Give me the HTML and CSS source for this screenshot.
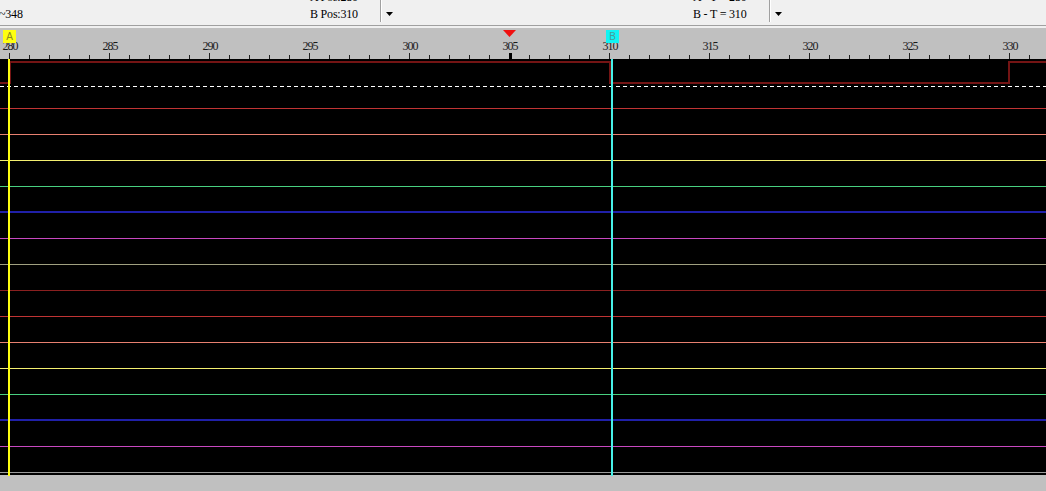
FILE: index.html
```html
<!DOCTYPE html>
<html>
<head>
<meta charset="utf-8">
<link rel="stylesheet" href="styles.css">
</head>
<body>
<div class="app">
  <div class="toolbar">
    <div class="field">
      <div class="lines range"><span>&nbsp;</span><span>~348</span></div>
    </div>
    <div class="combo combo-pos">
      <div class="lines"><span>A Pos:280</span><span>B Pos:310</span></div>
      <div class="sep"></div>
      <div class="drop"><svg class="arrow" width="7" height="4" viewBox="0 0 7 4"><polygon points="0,0 7,0 3.5,4"/></svg></div>
    </div>
    <div class="combo combo-diff">
      <div class="lines"><span>A - T = 280</span><span>B - T = 310</span></div>
      <div class="sep"></div>
      <div class="drop"><svg class="arrow" width="7" height="4" viewBox="0 0 7 4"><polygon points="0,0 7,0 3.5,4"/></svg></div>
    </div>
  </div>
  <div class="gap"></div>
  <div class="ruler">
    <div class="labels">
      <span>280</span><span>285</span><span>290</span><span>295</span><span>300</span><span>305</span><span>310</span><span>315</span><span>320</span><span>325</span><span>330</span>
    </div>
    <div class="ticks"></div>
    <div class="marker marker-a">A</div>
    <div class="marker marker-b">B</div>
    <svg class="trigger" width="13" height="7" viewBox="0 0 13 7"><polygon points="0,0 13,0 6.5,7"/></svg>
    <div class="trigger-tick"></div>
  </div>
  <div class="wave">
    <svg class="sig" width="1046" height="27" viewBox="0 0 1046 27" shape-rendering="crispEdges">
      <path d="M0 24 H10 V3 H610 V24 H1009 V3 H1046" fill="none" stroke="#741414" stroke-width="2"/>
    </svg>
    <div class="dash"></div>
    <div class="rows">
      <div class="row c-red"></div>
      <div class="row c-salmon"></div>
      <div class="row c-yellow"></div>
      <div class="row c-green"></div>
      <div class="row c-blue"></div>
      <div class="row c-magenta"></div>
      <div class="row c-khaki"></div>
      <div class="row c-maroon"></div>
      <div class="row c-red"></div>
      <div class="row c-salmon"></div>
      <div class="row c-yellow"></div>
      <div class="row c-green"></div>
      <div class="row c-blue"></div>
      <div class="row c-magenta"></div>
      <div class="row c-gray"></div>
    </div>
  </div>
  <div class="cursor cursor-a"></div>
  <div class="cursor cursor-b"></div>
</div>
</body>
</html>
```

FILE: styles.css
```css
html, body {
  margin: 0;
  padding: 0;
}

.app {
  position: relative;
  width: 1046px;
  height: 491px;
  overflow: hidden;
  background: #c0c0c0;
  font-family: "Liberation Serif", serif;
  color: #000;
}

.toolbar {
  display: flex;
  height: 25px;
  background: #f0f0f0;
  border-bottom: 1px solid #a0a0a0;
  overflow: hidden;
  font-size: 12px;
}

.field {
  width: 310px;
  flex: 0 0 310px;
}

.lines {
  display: flex;
  flex-direction: column;
  margin-top: -11px;
  line-height: 17px;
  white-space: nowrap;
  letter-spacing: -0.2px;
}

.range {
  margin-left: -1px;
}

.combo {
  display: flex;
  align-items: flex-start;
}

.combo-pos {
  flex: 0 0 383px;
}

.combo-pos .lines {
  width: 70px;
}

.combo-diff .lines {
  width: 76px;
}

.sep {
  width: 1px;
  height: 22px;
  background: #a0a0a0;
  border-right: 1px solid #ffffff;
}

.drop {
  flex: 1;
  padding: 12px 0 0 4px;
}

.arrow {
  display: block;
  fill: #000;
}

.gap {
  height: 2px;
  background: #f0f0f0;
}

.ruler {
  position: relative;
  height: 31px;
  background: #c0c0c0;
  display: flex;
  flex-direction: column;
  justify-content: flex-end;
}

.labels {
  display: flex;
  margin-left: -40px;
  height: 13px;
  font-size: 12px;
  line-height: 12px;
  letter-spacing: -1px;
  color: #1a1a1a;
  white-space: nowrap;
}

.labels span {
  flex: 0 0 100px;
  text-align: center;
}

.ticks {
  height: 6px;
  background-image:
    linear-gradient(to right, #202020 0 1px, transparent 1px),
    linear-gradient(to right, #202020 0 1px, transparent 1px);
  background-size: 100px 6px, 20px 4px;
  background-position: 9px 0, 9px 2px;
  background-repeat: repeat-x;
}

.marker {
  position: absolute;
  top: 2px;
  width: 13px;
  height: 13px;
  font-family: "Liberation Sans", sans-serif;
  font-size: 10px;
  line-height: 13px;
  text-align: center;
}

.marker-a {
  left: 3px;
  background: #ffff10;
  color: #8a8a20;
}

.marker-b {
  left: 606px;
  background: #10f4f4;
  color: #4a9a9a;
}

.trigger {
  position: absolute;
  left: 503px;
  top: 2px;
  fill: #f01010;
}

.trigger-tick {
  position: absolute;
  left: 509px;
  top: 25px;
  width: 3px;
  height: 6px;
  background: #000;
}

.wave {
  position: relative;
  height: 416px;
  background: #000;
}

.sig {
  display: block;
}

.dash {
  height: 1px;
  background: repeating-linear-gradient(to right, #ffffff 0 4px, transparent 4px 7px);
}

.row {
  height: 26px;
  box-sizing: border-box;
  border-bottom: 1px solid #888;
}

.row:first-child {
  height: 22px;
}

.c-red { border-bottom-color: #c03434; }
.c-salmon { border-bottom-color: #e88070; }
.c-yellow { border-bottom-color: #f4f070; }
.c-green { border-bottom-color: #48d080; }
.c-blue { border-bottom: 2px solid #2020a8; }
.c-magenta { border-bottom-color: #c848c0; }
.c-khaki { border-bottom-color: #a0a080; }
.c-maroon { border-bottom-color: #8a2020; }
.c-gray { border-bottom-color: #9a9a9a; }

.cursor {
  position: absolute;
  top: 59px;
  width: 2px;
  height: 417px;
}

.cursor-a {
  left: 8px;
  background: #ffff10;
}

.cursor-b {
  left: 611px;
  background: #48f0e8;
}
```
